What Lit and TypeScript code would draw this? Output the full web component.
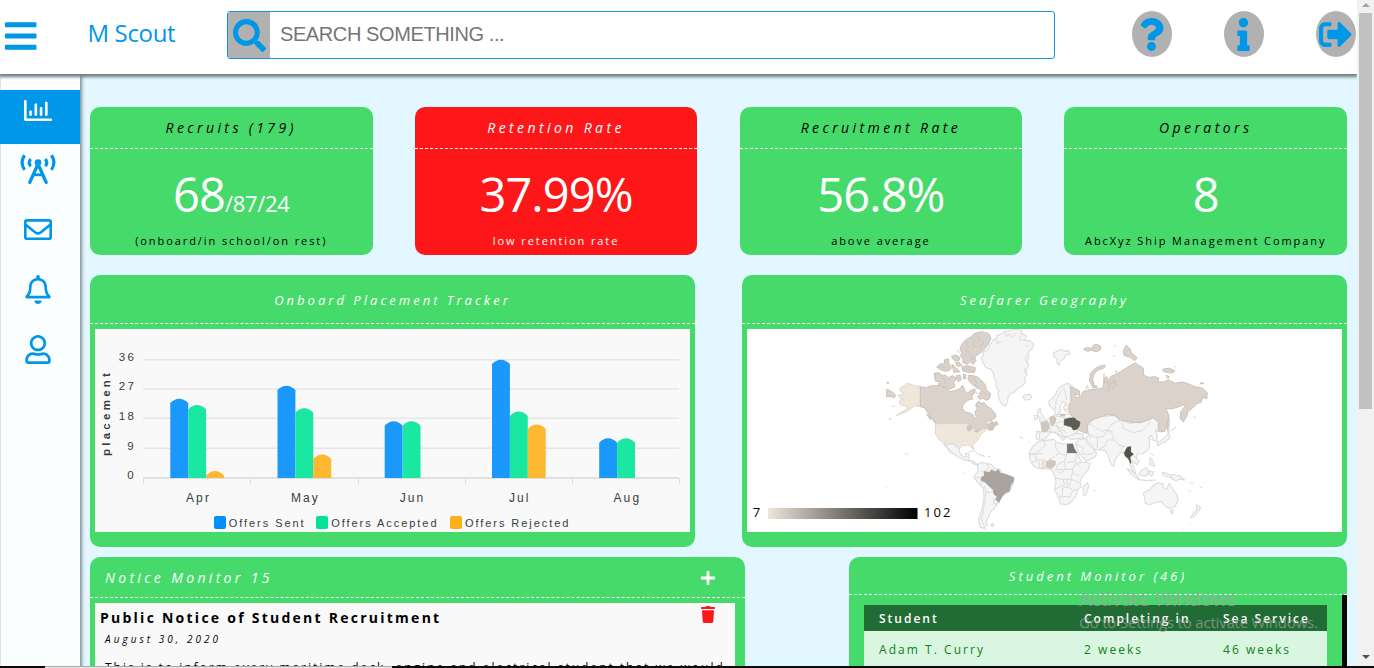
import { LitElement, html, svg, css } from "lit";
import { customElement, property } from "lit/decorators.js";
import { classMap } from "lit/directives/class-map.js";

type Glyph = { box: string; d: string };

const glyphs: Record<string, Glyph> = {
  bars: { box: "0 0 448 512", d: "M16 132h416c8.837 0 16-7.163 16-16V76c0-8.837-7.163-16-16-16H16C7.163 60 0 67.163 0 76v40c0 8.837 7.163 16 16 16zm0 160h416c8.837 0 16-7.163 16-16v-40c0-8.837-7.163-16-16-16H16c-8.837 0-16 7.163-16 16v40c0 8.837 7.163 16 16 16zm0 160h416c8.837 0 16-7.163 16-16v-40c0-8.837-7.163-16-16-16H16c-8.837 0-16 7.163-16 16v40c0 8.837 7.163 16 16 16z" },
  search: { box: "0 0 512 512", d: "M505 442.7L405.3 343c-4.5-4.5-10.6-7-17-7H372c27.6-35.3 44-79.7 44-128C416 93.1 322.9 0 208 0S0 93.1 0 208s93.1 208 208 208c48.3 0 92.7-16.4 128-44v16.3c0 6.4 2.5 12.5 7 17l99.7 99.7c9.4 9.4 24.6 9.4 33.9 0l28.3-28.3c9.4-9.4 9.4-24.6.1-34zM208 336c-70.7 0-128-57.2-128-128 0-70.7 57.2-128 128-128 70.7 0 128 57.2 128 128 0 70.7-57.2 128-128 128z" },
  question: { box: "0 0 384 512", d: "M202.021 0C122.202 0 70.503 32.703 29.914 91.026c-7.363 10.58-5.093 25.086 5.178 32.874l43.138 32.709c10.373 7.865 25.132 6.026 33.253-4.148 25.049-31.381 43.63-49.449 82.757-49.449 30.764 0 68.816 19.799 68.816 49.631 0 22.552-18.617 34.134-48.993 51.164-35.423 19.86-82.299 44.576-82.299 106.405V320c0 13.255 10.745 24 24 24h72.471c13.255 0 24-10.745 24-24v-5.773c0-42.86 125.268-44.645 125.268-160.627C377.504 66.256 286.902 0 202.021 0zM192 373.459c-38.196 0-69.271 31.075-69.271 69.271 0 38.195 31.075 69.27 69.271 69.27s69.271-31.075 69.271-69.271-31.075-69.27-69.271-69.27z" },
  info: { box: "0 0 192 512", d: "M20 424.229h20V279.771H20c-11.046 0-20-8.954-20-20V212c0-11.046 8.954-20 20-20h112c11.046 0 20 8.954 20 20v212.229h20c11.046 0 20 8.954 20 20V492c0 11.046-8.954 20-20 20H20c-11.046 0-20-8.954-20-20v-47.771c0-11.046 8.954-20 20-20zM96 0C56.235 0 24 32.235 24 72s32.235 72 72 72 72-32.235 72-72S135.764 0 96 0z" },
  signout: { box: "0 0 512 512", d: "M497 273L329 441c-15 15-41 4.5-41-17v-96H152c-13.3 0-24-10.7-24-24v-96c0-13.3 10.7-24 24-24h136V88c0-21.4 25.9-32 41-17l168 168c9.3 9.4 9.3 24.6 0 34zM192 436v-40c0-6.6-5.4-12-12-12H96c-17.7 0-32-14.3-32-32V160c0-17.7 14.3-32 32-32h84c6.6 0 12-5.4 12-12V76c0-6.6-5.4-12-12-12H96c-53 0-96 43-96 96v192c0 53 43 96 96 96h84c6.6 0 12-5.4 12-12z" },
  chart: { box: "0 0 512 512", d: "M396.8 352h22.4c6.4 0 12.8-6.4 12.8-12.8V108.8c0-6.4-6.4-12.8-12.8-12.8h-22.4c-6.4 0-12.8 6.4-12.8 12.8v230.4c0 6.4 6.4 12.8 12.8 12.8zm-192 0h22.4c6.4 0 12.8-6.4 12.8-12.8V140.8c0-6.4-6.4-12.8-12.8-12.8h-22.4c-6.4 0-12.8 6.4-12.8 12.8v198.4c0 6.4 6.4 12.8 12.8 12.8zm96 0h22.4c6.4 0 12.8-6.4 12.8-12.8V204.8c0-6.4-6.4-12.8-12.8-12.8h-22.4c-6.4 0-12.8 6.4-12.8 12.8v134.4c0 6.4 6.4 12.8 12.8 12.8zM496 400H48V80c0-8.84-7.16-16-16-16H16C7.16 64 0 71.16 0 80v336c0 17.67 14.33 32 32 32h464c8.84 0 16-7.16 16-16v-16c0-8.84-7.16-16-16-16zm-387.2-48h22.4c6.4 0 12.8-6.4 12.8-12.8v-70.4c0-6.4-6.4-12.8-12.8-12.8h-22.4c-6.4 0-12.8 6.4-12.8 12.8v70.4c0 6.4 6.4 12.8 12.8 12.8z" },
  mail: { box: "0 0 512 512", d: "M464 64H48C21.49 64 0 85.49 0 112v288c0 26.51 21.49 48 48 48h416c26.51 0 48-21.49 48-48V112c0-26.51-21.49-48-48-48zm0 48v40.805c-22.422 18.259-58.168 46.651-134.587 106.49-16.841 13.247-50.201 45.072-73.413 44.701-23.208.375-56.579-31.459-73.413-44.701C106.18 199.465 70.425 171.067 48 152.805V112h416zM48 400V214.398c22.914 18.251 55.409 43.862 104.938 82.646 21.857 17.205 60.134 55.186 103.062 54.955 42.717.231 80.509-37.199 103.053-54.947 49.528-38.783 82.032-64.401 104.947-82.653V400H48z" },
  bell: { box: "0 0 448 512", d: "M439.39 362.29c-19.32-20.76-55.47-51.99-55.47-154.29 0-77.7-54.48-139.9-127.94-155.16V32c0-17.67-14.32-32-31.98-32s-31.98 14.33-31.98 32v20.84C118.56 68.1 64.08 130.3 64.08 208c0 102.3-36.15 133.53-55.47 154.29-6 6.45-8.66 14.16-8.61 21.71.11 16.4 12.98 32 32.1 32h383.8c19.12 0 32-15.6 32.1-32 .05-7.55-2.61-15.27-8.61-21.71zM67.53 368c21.22-27.97 44.42-74.33 44.53-159.42 0-.2-.06-.38-.06-.58 0-61.86 50.14-112 112-112s112 50.14 112 112c0 .2-.06.38-.06.58.11 85.1 23.31 131.46 44.53 159.42H67.53zM224 512c35.32 0 63.97-28.65 63.97-64H160.03c0 35.35 28.65 64 63.97 64z" },
  user: { box: "0 0 448 512", d: "M313.6 304c-28.7 0-42.5 16-89.6 16-47.1 0-60.8-16-89.6-16C60.2 304 0 364.2 0 438.4V464c0 26.5 21.5 48 48 48h352c26.5 0 48-21.5 48-48v-25.6c0-74.2-60.2-134.4-134.4-134.4zM400 464H48v-25.6c0-47.6 38.8-86.4 86.4-86.4 14.6 0 38.3 16 89.6 16 51.7 0 74.9-16 89.6-16 47.6 0 86.4 38.8 86.4 86.4V464zM224 288c79.5 0 144-64.5 144-144S303.5 0 224 0 80 64.5 80 144s64.5 144 144 144zm0-240c52.9 0 96 43.1 96 96s-43.1 96-96 96-96-43.1-96-96 43.1-96 96-96z" },
  plus: { box: "0 0 14 14", d: "M6 0h2q.4 0 .4.5V5.6h5q.6 0 .6.5v1.8q0 .5-.6.5h-5v5q0 .6-.5.6H6.100q-.5 0-.5-.6v-5h-5Q0 8.400 0 7.900V6.100q0-.5.6-.5h5v-5Q5.600 0 6 0z" },
  trash: { box: "0 0 14 17", d: "M.4 1h3.900L5 .3Q5.200 0 5.600 0h2.800q.4 0 .6.3l.7.7h3.900q.4 0 .4.4v1.200q0 .4-.4.4H.4Q0 3 0 2.600V1.400Q0 1 .4 1zM1 4.200h12l-.7 11.400Q12.200 17 10.800 17H3.200Q1.800 17 1.700 15.600z" },
};

@customElement("fa-icon")
class FaIcon extends LitElement {
  @property() name = "";
  static styles = css`
    :host { display: block; flex: none; }
    .glyph { display: block; width: 100%; height: 100%; fill: currentColor; overflow: visible; }
    .leg { fill: none; stroke: currentColor; stroke-width: 3.300; stroke-linecap: round; }
    .rung { fill: none; stroke: currentColor; stroke-width: 2.800; }
    .wave { fill: none; stroke: currentColor; stroke-width: 3.200; }
  `;
  render() {
    if (this.name === "tower") {
      return html`<svg class="glyph" viewBox="0 0 36 29">
        <circle cx="18" cy="7.500" r="3.300"></circle>
        <path class="leg" d="M18 9L9.800 27.400M18 9L26.200 27.400"></path>
        <path class="rung" d="M13.500 19.800H22.500"></path>
        <path class="wave" d="M4.600 .3Q-.6 7.300 4.600 14.800M31.400 .3Q36.600 7.300 31.400 14.800M10.700 4Q7.800 7.500 10.700 11.300M25.300 4Q28.200 7.500 25.300 11.300"></path>
      </svg>`;
    }
    const g = glyphs[this.name];
    return html`<svg class="glyph" viewBox=${g.box}><path d=${g.d}></path></svg>`;
  }
}

@customElement("stat-card")
class StatCard extends LitElement {
  @property() heading = "";
  @property() value = "";
  @property() rest = "";
  @property() note = "";
  @property({ type: Boolean }) alert = false;
  static styles = css`
    :host { display: block; width: 282.500px; height: 148px; }
    .card { height: 100%; border-radius: 10px; background: #46da6b; color: #000; text-align: center; overflow: hidden; white-space: nowrap; }
    .alert { background: #fd1719; color: #fff; }
    .title { font: italic 14px/41px "Open Sans", sans-serif; letter-spacing: 3.400px; border-bottom: 1px dashed #fff; }
    .value { height: 79px; padding-top: 5px; font: 47px/80px "Open Sans", sans-serif; letter-spacing: -.9px; color: #fff; }
    .rest { font-size: 22px; line-height: 1; letter-spacing: -.35px; }
    .note { font: 11px/16px "Open Sans", sans-serif; letter-spacing: 1.920px; }
  `;
  render() {
    return html`<div class=${classMap({ card: true, alert: this.alert })}>
      <div class="title">${this.heading}</div>
      <div class="value">${this.value}<span class="rest">${this.rest}</span></div>
      <div class="note">${this.note}</div>
    </div>`;
  }
}

const months = [
  { name: "Apr", x: 170.300, label: 186, tops: [398.700, 405, 471] },
  { name: "May", x: 277.500, label: 291, tops: [385.700, 408.300, 454.500] },
  { name: "Jun", x: 384.700, label: 399.700, tops: [421.300, 421.300] },
  { name: "Jul", x: 492, label: 509, tops: [359.700, 411.500, 424.500] },
  { name: "Aug", x: 599.200, label: 613.500, tops: [438.300, 438.300] },
];
const barColors = ["#1a98fb", "#1ae7a1", "#fdb730"];

@customElement("placement-chart")
class PlacementChart extends LitElement {
  static styles = css`
    :host { display: block; height: 203px; background: #f9f9f9; }
    .plot { display: block; width: 100%; height: 100%; }
    .plot text { font-family: "Liberation Sans", Arial, sans-serif; fill: #373d3f; }
    .grid { stroke: #e6e6e6; stroke-width: 1.500; }
    .axis { stroke: #e0e0e0; stroke-width: 2; }
    .tick { stroke: #e0e0e0; stroke-width: 1; }
    .num { font-size: 11.500px; letter-spacing: 2.500px; }
    .month { font-size: 12px; letter-spacing: 2.100px; }
    .key { font-size: 11px; letter-spacing: 1.950px; }
    .side { font-size: 11.500px; font-weight: bold; letter-spacing: 3.250px; }
  `;
  bar(x: number, top: number, i: number) {
    const w = 17.900;
    return svg`<path fill=${barColors[i]} d=${`M${x} 478V${top + 4.500}C${x + 5} ${top - 1.500} ${x + w - 5} ${top - 1.500} ${x + w} ${top + 4.500}V478z`}></path>`;
  }
  render() {
    const rows: [string, number, number][] = [["36", 359.700, 361.300], ["27", 388.900, 390.300], ["18", 418.200, 420.300], ["9", 448.200, 450.300], ["0", 478, 479.300]];
    return html`<svg class="plot" viewBox="95 329 595 203">
      ${rows.slice(0, 4).map(([, y]) => svg`<path class="grid" d=${`M143 ${y}H679`}></path>`)}
      ${rows.map(([t, , b]) => svg`<text class="num" x=${t.length > 1 ? 118.700 : 127.300} y=${b}>${t}</text>`)}
      <path class="axis" d="M143 478H679"></path>
      ${[143.500, 250.500, 358.500, 465.500, 572.500, 679.500].map((x) => svg`<path class="tick" d=${`M${x} 478V484.500`}></path>`)}
      ${months.map((m) => m.tops.map((t, i) => this.bar(m.x + i * 17.900, t, i)))}
      ${months.map((m) => svg`<text class="month" x=${m.label} y="502">${m.name}</text>`)}
      <text class="side" transform="translate(110 456) rotate(-90)">placement</text>
      <rect x="214" y="516" width="12" height="13" rx="2" fill="#008ffb"></rect>
      <rect x="316" y="516" width="12" height="13" rx="2" fill="#00e396"></rect>
      <rect x="450" y="516" width="12" height="13" rx="2" fill="#feb019"></rect>
      <text class="key" x="228.700" y="527">Offers Sent</text>
      <text class="key" x="331.200" y="527">Offers Accepted</text>
      <text class="key" x="464.900" y="527">Offers Rejected</text>
    </svg>`;
  }
}

@customElement("world-map")
class WorldMap extends LitElement {
  static styles = css`
    :host { display: block; height: 203px; background: #fff; }
    .map { display: block; width: 100%; height: 100%; }
    .map text { font: 13px "Open Sans", sans-serif; letter-spacing: 2.100px; fill: #000; }
    path { stroke-linejoin: round; }
    .land { fill: #f5f5f5; stroke: #dcdcdc; stroke-width: 3.300; }
    .line { fill: none; stroke: #dcdcdc; stroke-width: 3; }
    .tan { fill: #dbd3cb; stroke: #cbc1b8; stroke-width: 3; }
    .coast { fill: none; stroke: #cbc1b8; stroke-width: 2.500; }
    .cream { fill: #efe6dc; stroke: #e0d3c7; stroke-width: 2.500; }
    .rose { fill: #cfc6be; stroke: #c4bab1; stroke-width: 1.500; }
    .brazil { fill: #aba39d; stroke: #9f9791; stroke-width: 2; }
    .egypt { fill: #77736e; stroke: #68645f; stroke-width: 2; }
    .ukraine { fill: #5f5b55; stroke: #55514b; stroke-width: 2; }
    .myanmar { fill: #524e49; stroke: #4b4843; stroke-width: 2; }
    .sea { fill: #fff; stroke: #cbc1b8; stroke-width: 2; }
  `;
  render() {
    return html`<svg class="map" viewBox="747 329 595 203">
      <defs><linearGradient id="ramp"><stop offset="0" stop-color="#efe6dc"></stop><stop offset="1" stop-color="#000"></stop></linearGradient></defs>
      <g transform="translate(880 325) scale(.33333)">
        <path class="land" d="M303 101L311 90 308 82 322 75 329 60 341 44 352 38 349 33 362 27 374 19 391 16 407 12 425 16 426 26 440 32 434 46 449 47 462 58 456 70 444 84 447 96 441 108 446 120 438 136 441 150 433 160 436 172 426 184 414 189 405 200 392 206 384 218 383 232 376 244 366 238 360 228 354 210 356 196 348 184 349 170 341 156 340 143 331 131 318 128 311 116z"></path>
        <path class="line" d="M341 44L355 48 350 56 365 50M374 19L380 34 390 28 398 38 407 24M425 26L418 44 434 46M436 60L446 66M440 90L436 104 442 116M434 130L436 146"></path>
        <path class="land" d="M430 213L440 208 450 208 456 216 450 223 438 226 431 220z"></path>
        <path class="cream" d="M121 185L102 181 84 175 72 182 64 186 58 197 70 203 67 208 54 210 60 220 70 222 58 228 62 240 74 243 82 248 74 256 60 264 48 272 66 266 82 258 94 250 104 242 121 245z"></path>
        <path class="tan" d="M20 193L30 197 39 203 47 210 42 219 33 214 20 216zM20 172L26 173 24 177zM75 386L80 387M84 389L86 391M140 268L148 272 153 284 148 280zM26 283L34 280M37 243L43 244"></path>
        <path class="tan" d="M121 185L140 188 153 182 168 183 181 180 186 186 202 190 212 200 228 196 240 190 248 180 254 196 260 206 270 198 282 192 284 204 275 214 278 222 262 226 250 238 247 250 258 262 270 264 280 270 283 282 289 276 285 262 292 250 287 240 295 228 306 236 312 232 321 244 332 250 346 266 348 276 338 284 322 290 316 298 328 296 324 308 316 312 300 314 292 320 284 322 276 312 268 296H167L158 284 147 268 140 258 133 248 121 245z"></path>
        <path class="tan" d="M163 144L178 144 188 152 196 150 205 158 218 152 228 160 221 174 226 184 212 192 200 186 186 184 175 178 180 170 166 168zM229 152L240 150 244 164 236 170 230 164zM250 147L258 150 256 162 250 160zM266 150L280 152 292 156 306 168 316 180 320 196 332 206 328 222 318 226 308 218 302 224 292 216 300 208 302 194 288 186 276 178 264 164z"></path>
        <path class="tan" d="M333 40L326 26 306 20 286 24 272 36 258 44 246 56 240 72 246 84 240 92 250 102 248 112 262 118 270 110 280 118 288 106 284 96 298 86 310 76 322 62zM246 126L262 122 286 128 284 142 262 142 248 138zM214 94L228 90 240 98 236 108 222 106zM226 112L238 112 246 122 232 124zM170 126L182 116 192 118 194 104 206 102 206 114 216 128 206 138 192 138 182 134zM216 118L228 128 240 140 222 142zM232 78L238 82"></path>
        <path class="coast" d="M272 36L284 50 276 62 290 66M258 50L266 66 258 76 272 84M290 32L300 44 292 54M250 90L262 92M306 44L310 56 298 66M246 132L284 136M268 92L280 98 272 104M186 160L198 166 192 176M280 164L292 172 284 182M178 126L196 128M306 196L318 208"></path>
        <path class="sea" d="M284 192L294 190 304 196 300 204 290 206z"></path>
        <path class="cream" d="M167 296H262L272 304 280 312 290 322 302 314 312 308 316 318 302 328 298 340 284 354 278 362 282 374 276 370 270 360 246 362 238 372 226 360 214 356 204 360 190 352 178 346 166 326z"></path>
        <path class="rose" d="M262 304L270 302 277 308 270 318 262 316zM284 320L300 312 292 322zM334 288L344 294 348 288 356 298 346 302 338 316 324 316 326 304z"></path>
        <path class="land" d="M190 353L204 360 214 356 226 360 236 370 240 384 248 394 260 396 256 386 266 384 268 394 264 404 278 408 292 418 304 418 300 424 284 418 272 408 256 406 234 396 218 384 206 372 194 362z"></path>
        <path class="line" d="M192 354L200 366 208 382 214 386M268 380L282 378 296 388 304 390 316 394M280 418L276 412"></path>
        <path class="land" d="M292 420L306 412 320 416 334 418 342 428 360 434 366 444 400 458 400 474 388 500 368 512 352 536 342 552 332 560 326 574 318 590 322 600 310 610 300 606 296 580 304 560 308 540 312 520 310 490 298 478 282 458 286 448 294 440z"></path>
        <path class="line" d="M322 416L326 432 310 438 302 440M342 430L338 446M355 434L358 444M286 456L300 458 304 468 302 480M312 480L318 500 314 530 310 560 304 580 312 602M318 502L342 500 352 520 346 534M300 605L320 614"></path>
        <path class="land" d="M342 520L352 524 358 532 348 538 340 532z"></path>
        <path class="brazil" d="M305 456L314 452 312 440 330 442 334 434 344 440 356 434 360 444 382 450 402 458 401 468 392 480 388 498 374 504 366 514 356 532 348 524 352 514 342 508 340 494 328 484 316 472 304 466z"></path>
        <circle cx="337" cy="600" r="4" class="land"></circle>
        <path class="line" d="M252 444L256 443M17 487L21 485M38 480L41 479M418 335L426 337M448 349L450 352M470 176L471 179M302 390L310 394M322 394L332 396M332 402L334 403"></path>
      </g>
      <g transform="translate(1020 320) scale(.33333)">
        <path class="land" d="M100 98L112 94 122 88 132 94 146 92 150 102 136 106 132 116 120 124 118 136 110 128 112 118 102 110z"></path>
        <path class="land" d="M88 256L86 244 96 236 108 220 114 206 126 198 142 190 158 198 154 212 152 230 148 250 150 262 148 276 136 274 130 262 138 250 128 244 120 260 122 274 114 282 106 286 104 272z"></path>
        <path class="line" d="M106 270L108 244 120 218 132 204M132 204L138 226 140 240M152 208L144 196M150 256L136 254"></path>
        <path class="land" d="M54 272L62 264 60 276 70 288 74 302 58 306 60 294 52 286zM44 286L54 288 52 298 44 300z"></path>
        <path class="land" d="M50 334L70 336 92 334 100 330 116 330 124 344 132 352 138 346 152 344 176 340 190 342 188 356 170 356 152 358 138 352 130 362 116 346 104 338 94 336 86 344 76 356 60 360 48 356z"></path>
        <path class="land" d="M92 290L108 284 148 282 150 262 166 280 196 306 204 316 198 340 178 330 160 344 140 350 120 346 104 336 92 336 90 320 64 310 74 304z"></path>
        <path class="line" d="M108 288L130 292 134 302 112 308 108 320 124 324 136 316M92 318L112 316 116 330 132 330 138 340M112 336L124 334 128 346M132 284L136 302M136 268L150 266M60 336L58 356"></path>
        <path class="land" d="M200 320L220 298 240 290 262 288 284 286 300 300 330 310 360 306 384 300 398 292 416 308 420 326 412 334 406 330 412 348 410 362 400 362 394 346 386 354 390 370 386 388 366 402 352 402 348 414 358 424 352 434 340 426 334 420 340 440 348 460 340 456 330 436 328 420 316 408 306 396 296 404 286 418 282 438 274 434 264 406 256 392 240 390 222 388 230 400 226 410 198 424 188 412 176 396 166 370 178 358 198 356 206 342z"></path>
        <path class="line" d="M206 310L226 322 246 334 262 330 276 312 300 300M304 306L312 326 340 338 366 332 384 314 394 298M206 342L226 352 250 350 262 330 276 342 282 360 296 374 318 380M282 360L262 360 254 380 236 388M184 344L204 364 222 382M198 356L200 370 226 390M188 400L204 404 222 398M296 374L310 380 300 392M262 330L280 336M232 352L232 384M206 342L212 356M340 406L352 418M168 372L190 384 186 398M386 354L396 360"></path>
        <path class="land" d="M28 400L36 382 54 364 72 362 102 358 108 366 130 372 158 372 168 392 178 414 186 426 210 430 206 448 188 468 180 486 184 500 174 508 168 528 152 548 140 554 122 552 116 534 104 508 108 486 104 468 98 454 88 446 60 446 42 440 30 422z"></path>
        <path class="line" d="M72 362L76 378 46 402 30 402M108 366L106 380 118 400 96 414 84 420M46 402L50 420 78 420M118 400L138 408 142 392M142 398H170M138 408L134 424 116 430 108 446M170 400L166 424 140 428M60 446L56 424M78 446L80 424M134 424L136 448 106 450M136 448H158L168 430 182 440M158 448L154 478 178 488M104 474L128 478 134 494 104 508M128 478L154 478 146 500 128 504 126 530 114 534M146 500L158 512 150 530 126 530M174 508L158 512M116 458L132 454M36 428L50 420M186 426L170 430M28 404L70 400M160 460L178 468M144 476L140 500"></path>
        <path class="land" d="M190 500L202 488 206 498 198 524 190 526z"></path>
        <path class="tan" d="M152 200L166 206 180 214 178 226 164 222 170 234 182 228 190 214 202 212 216 208 240 206 250 202 252 176 260 170 266 182 272 170 286 164 296 158 316 146 332 136 346 128 356 136 370 144 370 164 384 172 404 170 416 174 414 186 430 186 446 180 466 190 486 186 506 192 524 200 546 204 562 218 560 236 548 232 544 246 530 252 520 262 504 274 502 286 490 306 480 296 482 276 494 260 496 252 478 260 456 266 438 266 446 284 444 312 434 334 418 336 414 322 416 306 400 292 380 302 360 308 330 306 302 300 284 286 262 284 240 292 220 298 206 306 202 318 202 340 184 334 172 328 178 306 162 296 150 280 146 262 154 246z"></path>
        <path class="tan" d="M208 182L212 160 224 146 240 138 256 136 252 144 234 150 222 162 218 176 222 196 234 200 220 204zM190 88L202 82 214 86 220 76 228 72 242 78 242 88 228 96 214 90 204 94zM310 92L318 76 330 86 334 98 352 114 344 122 330 112 312 106zM428 148L446 144 464 152 460 158 442 158 430 154zM438 166L448 170 444 176zM446 292L448 308 444 330 440 318zM454 334L468 320M540 188L552 190 544 192zM280 110L284 108M284 76V80M464 138V142M288 160V150M252 160V190M268 190L290 184"></path>
        <path class="coast" d="M260 180L268 196 264 216M280 176L288 196 276 206 264 190"></path>
        <path class="sea" d="M196 204L202 196 206 208z"></path>
        <path class="rose" d="M62 308L72 308 80 302 88 312 86 330 76 336 66 334zM90 292L102 288 108 294 106 308 96 318 90 308zM80 424L92 420 106 424 106 434 94 446 80 440zM122 282L136 284 132 288 122 288z"></path>
        <path class="cream" d="M66 426L74 424V444L66 446z"></path>
        <path class="ukraine" d="M134 298L150 294 164 294 168 300 180 306 178 318 170 328 160 330 154 320 144 318 132 314z"></path>
        <path class="egypt" d="M142 373L158 372 162 386 170 398H142z"></path>
        <path class="myanmar" d="M313 398L322 382 332 380 332 396 340 402 330 412 332 430 326 416 316 408z"></path>
        <path class="land" d="M322 446L334 452 350 466 358 476 346 472 332 462zM356 462L364 452 378 442 386 452 380 468 364 466zM388 452L400 456 396 468 388 464zM390 412L398 422 404 440 396 436 390 424zM426 456L444 462 466 466 480 468 494 480 480 478 466 482 450 472 432 468zM352 478L380 482 408 480"></path>
        <path class="land" d="M410 366L420 364 434 352 446 340 448 326 442 334 450 352 436 366 420 372 414 378z"></path>
        <path class="line" d="M446 340L448 294M392 400L402 406M386 430L390 440M454 466V478"></path>
        <path class="land" d="M370 520L390 508 402 494 416 488 430 492 428 502 440 508 448 490 456 504 470 524 474 540 466 558 450 566 436 558 424 544 406 548 388 554 376 550 374 536z"></path>
        <path class="land" d="M450 572L460 570 456 582zM530 554L542 564 534 576 522 590 512 594 518 582 530 570z"></path>
        <path class="line" d="M508 488L522 490M504 512L512 514M540 504L548 500M520 290L530 294M486 628L490 629M508 610L512 611M2 352L10 354M220 510L226 512M212 426L216 428M276 436L284 440"></path>
      </g>
      <rect x="768" y="508" width="149.500" height="11" fill="url(#ramp)"></rect>
      <text x="752.800" y="517.300">7</text>
      <text x="924" y="517.300">102</text>
    </svg>`;
  }
}

@customElement("app-root")
class AppRoot extends LitElement {
  static styles = css`
    :host { display: block; width: 1374px; height: 668px; overflow: hidden; position: relative; font-family: "Open Sans", sans-serif; background: #e2f7ff; }
    .screen { display: grid; grid-template-columns: 1357px 17px; height: 668px; }
    .page { display: grid; grid-template-rows: 74px 1fr; min-height: 0; overflow: hidden; }
    .top { display: flex; align-items: flex-start; background: #fff; box-shadow: 0 2px 3px 1px #6f7e83; z-index: 2; color: #0097e8; }
    .burger { width: 31.500px; height: 36px; margin: 18px 0 0 4.600px; }
    .brand { width: 139px; margin-left: 51.400px; font-size: 24px; line-height: 66px; letter-spacing: -.35px; white-space: nowrap; }
    .search { display: flex; box-sizing: border-box; width: 828px; height: 48px; margin: 11px 0 0 .5px; border: 1px solid #1496dd; border-radius: 3px; overflow: hidden; }
    .lens { width: 42px; background: #b1b1b1; }
    .lens-icon { width: 33px; height: 33px; margin: 7px 0 0 5px; }
    .hint { padding-left: 10px; font: 20px/44px "Liberation Sans", Arial, sans-serif; letter-spacing: -.4px; color: #757575; white-space: nowrap; }
    .tools { display: flex; gap: 52px; margin: 11px 0 0 77px; }
    .tool { display: flex; align-items: center; justify-content: center; width: 40px; height: 46px; border-radius: 50%; background: #b1b1b1; }
    .tool-icon { width: 33px; height: 33px; }
    .body { display: grid; grid-template-columns: 80px 1fr; min-height: 0; }
    .side { display: flex; flex-direction: column; padding-top: 16px; background: #fbfeff; box-shadow: inset 1px 0 #dde2e4, 1px 0 3px 1px #82929a; color: #0097e8; z-index: 1; }
    .item { display: flex; justify-content: center; box-sizing: border-box; height: 60px; padding: 5px 4px 0 0; }
    .active { height: 54px; margin-bottom: 6px; padding-top: 6px; background: #0097e8; color: #fff; }
    .item-icon { width: 28px; height: 29px; }
    .wide { width: 36px; }
    .main { padding: 33px 10px 0; display: flex; flex-direction: column; min-width: 0; overflow: hidden; }
    .stats { display: flex; justify-content: space-between; height: 148px; }
    .charts { display: flex; justify-content: space-between; margin-top: 20px; }
    .panel { border-radius: 10px; background: #46da6b; overflow: hidden; white-space: nowrap; }
    .chart { width: 605px; height: 272px; }
    .head { padding-top: 3px; font: italic 13px/45px "Open Sans", sans-serif; letter-spacing: 3.020px; text-align: center; color: #fff; border-bottom: 1px dashed #fff; }
    .fill { margin: 5px; }
    .monitors { display: flex; justify-content: space-between; flex: none; margin-top: 10px; height: 180px; }
    .notices { width: 655px; }
    .notice-head { display: flex; justify-content: space-between; align-items: center; height: 40px; padding: 1px 30px 0 15px; box-sizing: border-box; font: italic 14px/38px "Open Sans", sans-serif; letter-spacing: 3.330px; color: #fff; }
    .notice-bar { border-bottom: 1px dashed #fff; }
    .plus { width: 14px; height: 14px; }
    .notice { display: grid; grid-template-columns: 1fr 14px; width: 640px; height: 160px; margin: 5px 0 0 5px; padding: 0 20px 0 5px; box-sizing: border-box; background: #f9f9f9; color: #000; overflow: hidden; }
    .notice-body { min-width: 0; }
    .subject { font-size: 14px; font-weight: 700; line-height: 29px; letter-spacing: 2.250px; }
    .date { padding-left: 5px; font-size: 10px; font-style: italic; line-height: 15px; letter-spacing: 3.030px; }
    .text { padding: 12px 0 0 5px; width: 640px; font-size: 12px; line-height: 18px; letter-spacing: 1.990px; }
    .trash { width: 14px; height: 17px; margin-top: 3px; color: #fd1719; }
    .students { width: 498px; }
    .student-head { padding-top: 1px; font: italic 13px/36px "Open Sans", sans-serif; letter-spacing: 3px; text-align: center; color: #fff; border-bottom: 1px dashed #fff; }
    .scroller { display: flex; justify-content: space-between; }
    .table { width: 463px; margin: 10px 0 0 15px; }
    .row { display: grid; grid-template-columns: 205px 139px 1fr; padding-left: 15px; background: #d9f6e1; font-size: 12px; line-height: 37px; letter-spacing: 2.050px; color: #128019; }
    .labels { height: 26px; background: #216c34; font-weight: 600; line-height: 28px; letter-spacing: 2px; color: #fff; }
    .track { width: 5px; height: 150px; background: #0c0608; }
    .scrollbar { display: flex; flex-direction: column; align-items: center; background: #f1f1f1; }
    .arrow { border: 4px solid transparent; border-top: 0; border-bottom-color: #a3a3a3; margin: 3px 0 6px; }
    .thumb { width: 13px; height: 396px; background: #c1c1c1; }
    .down { border: 4px solid transparent; border-bottom: 0; border-top-color: #505050; margin-top: 246px; }
    .taskbar { position: absolute; left: 0; right: 0; bottom: 0; height: 2px; z-index: 3; background: linear-gradient(90deg, #0c0a0b 45px, transparent 45px 392px, #0c0a0b 392px), linear-gradient(#a8a8a8 50%, #e8e8e8 50%); }
    .watermark { position: absolute; left: 1079px; top: 584px; z-index: 3; color: rgba(160, 163, 160, .7); white-space: nowrap; }
    .wm-big { font-size: 20px; line-height: 29px; letter-spacing: -.44px; }
    .wm-small { margin-top: -1px; font-size: 15px; line-height: 20px; letter-spacing: -.2px; }
  `;
  render() {
    const nav = ["chart", "tower", "mail", "bell", "user"];
    return html`
      <div class="screen">
        <div class="page">
          <header class="top">
            <fa-icon class="burger" name="bars"></fa-icon>
            <div class="brand">M Scout</div>
            <div class="search">
              <div class="lens"><fa-icon class="lens-icon" name="search"></fa-icon></div>
              <div class="hint">SEARCH SOMETHING ...</div>
            </div>
            <div class="tools">
              ${["question", "info", "signout"].map((n) => html`<div class="tool"><fa-icon class="tool-icon" name=${n}></fa-icon></div>`)}
            </div>
          </header>
          <div class="body">
            <nav class="side">
              ${nav.map((n, i) => html`<div class=${classMap({ item: true, active: i === 0 })}><fa-icon class=${classMap({ "item-icon": true, wide: n === "tower" })} name=${n}></fa-icon></div>`)}
            </nav>
            <main class="main">
              <section class="stats">
                <stat-card heading="Recruits (179)" value="68" rest="/87/24" note="(onboard/in school/on rest)"></stat-card>
                <stat-card alert heading="Retention Rate" value="37.99%" note="low retention rate"></stat-card>
                <stat-card heading="Recruitment Rate" value="56.8%" note="above average"></stat-card>
                <stat-card heading="Operators" value="8" note="AbcXyz Ship Management Company"></stat-card>
              </section>
              <section class="charts">
                <div class="panel chart"><div class="head">Onboard Placement Tracker</div><placement-chart class="fill"></placement-chart></div>
                <div class="panel chart"><div class="head">Seafarer Geography</div><world-map class="fill"></world-map></div>
              </section>
              <section class="monitors">
                <div class="panel notices">
                  <div class="notice-bar"><div class="notice-head"><span>Notice Monitor 15</span><fa-icon class="plus" name="plus"></fa-icon></div></div>
                  <div class="notice">
                    <div class="notice-body">
                      <div class="subject">Public Notice of Student Recruitment</div>
                      <div class="date">August 30, 2020</div>
                      <div class="text">This is to inform every maritime deck, engine and electrical student that we would</div>
                    </div>
                    <fa-icon class="trash" name="trash"></fa-icon>
                  </div>
                </div>
                <div class="panel students">
                  <div class="student-head">Student Monitor (46)</div>
                  <div class="scroller">
                    <div class="table">
                      <div class="row labels"><span>Student</span><span>Completing in</span><span>Sea Service</span></div>
                      <div class="row"><span>Adam T. Curry</span><span>2 weeks</span><span>46 weeks</span></div>
                    </div>
                    <div class="track"></div>
                  </div>
                </div>
              </section>
            </main>
          </div>
        </div>
        <div class="scrollbar"><div class="arrow"></div><div class="thumb"></div><div class="down"></div></div>
      </div>
      <div class="watermark"><div class="wm-big">Activate Windows</div><div class="wm-small">Go to Settings to activate Windows.</div></div>
      <div class="taskbar"></div>
    `;
  }
}
